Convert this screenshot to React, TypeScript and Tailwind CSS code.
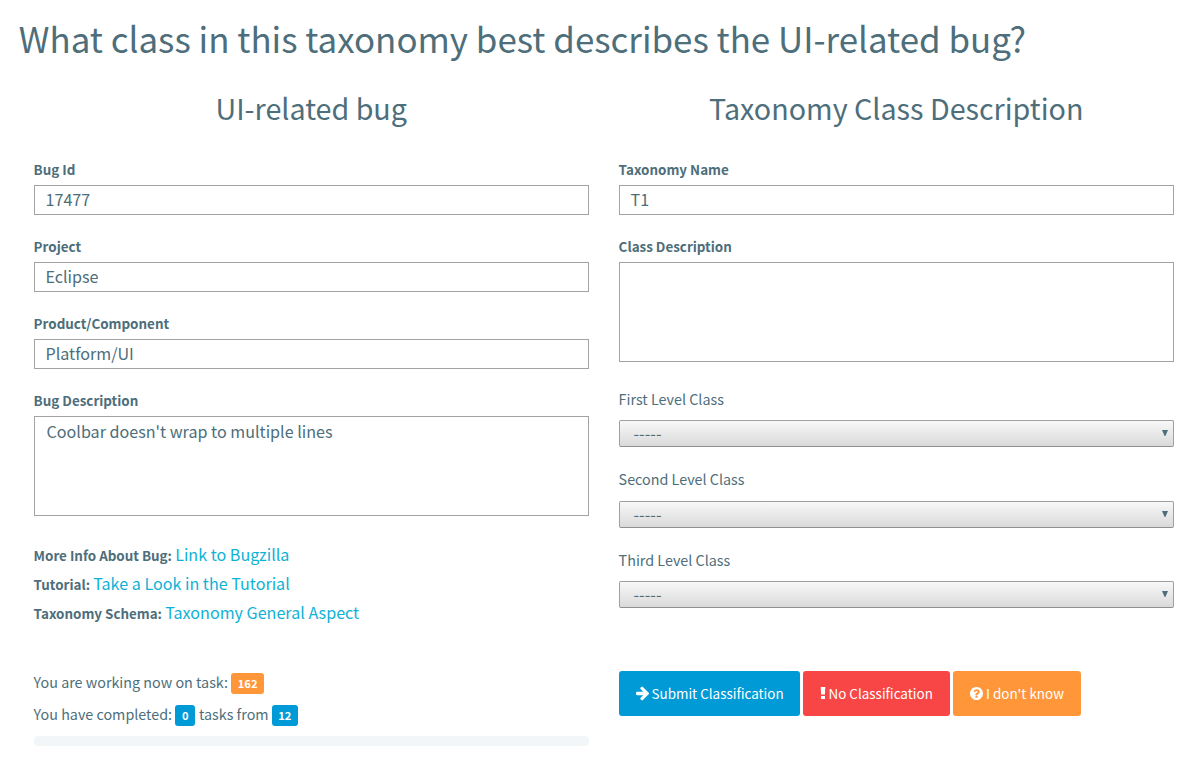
import type { ReactNode } from "react";

function Field({ label, value, tall = false }: { label: string; value: string; tall?: boolean }) {
  return (
    <div className="flex flex-col">
      <label className="-ml-[0.4px] h-[26px] text-[13.42px] leading-5 font-bold">{label}</label>
      {tall ? (
        <div className="h-[100px] border border-[#a3a3a3] bg-white pt-0.5 pl-[11.5px] text-[16.13px] leading-6">{value}</div>
      ) : (
        <div className="h-[30px] border border-[#a3a3a3] bg-white pl-[10.5px] text-[16.13px] leading-[26px]">{value}</div>
      )}
    </div>
  );
}

function LevelSelect({ label }: { label: string }) {
  return (
    <div className="flex flex-col">
      <span className="-ml-[0.4px] h-[31.4px] text-[14.34px] leading-5">{label}</span>
      <div className="flex h-[27px] items-start justify-between rounded-[2px] border border-[#a0a0a0] border-b-[#8f8f8f] bg-linear-to-b from-[#f8f8f8] to-[#dadada] pr-[5px] pl-[13.5px]">
        <span className="text-[16.14px] leading-[25px]">-----</span>
        <svg className="mt-[9px] h-[6px] w-[6px]" viewBox="0 0 6 6" fill="#4d6e7a">
          <path d="M0 0h6L3.4 6h-.8z" />
        </svg>
      </div>
    </div>
  );
}

function Badge({ className, children }: { className: string; children: ReactNode }) {
  return (
    <span className={`inline-block h-[21px] rounded-[3px] text-center align-baseline text-[11.2px] leading-[20px] font-bold text-white ${className}`}>
      {children}
    </span>
  );
}

function ActionButton({ className, icon, children }: { className: string; icon: ReactNode; children: ReactNode }) {
  return (
    <button className={`flex h-[45px] items-center rounded-[3px] text-[13.45px] leading-none whitespace-nowrap text-white ${className}`}>
      {icon}
      <span className="pb-px leading-5">{children}</span>
    </button>
  );
}

function InfoLine({ label, link }: { label: string; link: string }) {
  return (
    <p className="-ml-[0.4px] h-[29px] text-[16.13px] leading-[29px]">
      <b className="text-[13.4px]">{label}</b>
      <a className="ml-[3.2px] text-[#0fb2d6]">{link}</a>
    </p>
  );
}

export default function App() {
  return (
    <main className="h-[777px] w-[1201px] bg-white pt-4 pl-[19px] font-['Noto_Sans_CJK_SC',sans-serif] text-[#4d6e7a]">
      <h1 className="-ml-[0.2px] h-[72px] text-[34.9px] leading-[44px]">What class in this taxonomy best describes the UI-related bug?</h1>
      <div className="flex gap-[30px] pl-[15px]">
        <section className="w-[555px]">
          <h2 className="-ml-[0.5px] h-[71px] text-center text-[28.7px] leading-10">UI-related bug</h2>
          <div className="flex flex-col gap-[21px]">
            <Field label="Bug Id" value="17477" />
            <Field label="Project" value="Eclipse" />
            <Field label="Product/Component" value="Platform/UI" />
            <Field label="Bug Description" value="Coolbar doesn't wrap to multiple lines" tall />
          </div>
          <div className="mt-6">
            <InfoLine label="More Info About Bug:" link="Link to Bugzilla" />
            <InfoLine label="Tutorial:" link="Take a Look in the Tutorial" />
            <InfoLine label="Taxonomy Schema:" link="Taxonomy General Aspect" />
          </div>
          <div className="mt-[39px] -ml-[0.4px] text-[14.34px] leading-8">
            <p className="h-8">
              You are working now on task: <Badge className="w-[33px] bg-[#ff973a]">162</Badge>
            </p>
            <p className="h-[38px]">
              You have completed: <Badge className="mr-[0.4px] w-5 bg-[#009bd7]">0</Badge> tasks from{" "}
              <Badge className="w-[26px] bg-[#009bd7]">12</Badge>
            </p>
          </div>
          <div className="h-[10px] rounded-[4px] bg-[#f2f6f8]" />
        </section>
        <section className="w-[555px]">
          <h2 className="-ml-[0.5px] h-[71px] text-center text-[28.7px] leading-10">Taxonomy Class Description</h2>
          <div className="flex flex-col gap-[21px]">
            <Field label="Taxonomy Name" value="T1" />
            <Field label="Class Description" value="" tall />
          </div>
          <div className="mt-[27px] flex flex-col gap-[22px]">
            <LevelSelect label="First Level Class" />
            <LevelSelect label="Second Level Class" />
            <LevelSelect label="Third Level Class" />
          </div>
          <div className="mt-[62.8px] flex gap-[3px]">
            <ActionButton
              className="w-[181px] gap-[3px] bg-[#009bd7] pl-[16.5px]"
              icon={
                <svg className="h-[15px] w-[13px]" viewBox="64 0 1472 1664" fill="currentColor">
                  <path d="M1472 832q0 54-37 91l-651 651q-39 37-91 37-51 0-90-37l-75-75q-38-38-38-91t38-91l293-293H117q-52 0-84.500-37.500T0 896V768q0-53 32.500-90.500T117 640h704L528 346q-38-36-38-90t38-90l75-75q38-38 90-38 53 0 91 38l651 651q37 35 37 90z" transform="translate(64)" />
                </svg>
              }
            >
              Submit Classification
            </ActionButton>
            <ActionButton
              className="w-[147px] gap-[2.5px] bg-[#f84545] pl-[17px]"
              icon={
                <svg className="h-3 w-[6px]" viewBox="0 0 6 12" fill="currentColor">
                  <path d="M.7 0h4.600L4.900 7.500H1.100zM1 9h4v3H1z" />
                </svg>
              }
            >
              No Classification
            </ActionButton>
            <ActionButton
              className="w-32 gap-[3px] bg-[#ff973a] pl-[17px]"
              icon={
                <svg className="h-[13px] w-[13px]" viewBox="0 0 1536 1536" fill="currentColor">
                  <path fillRule="evenodd" d="M896 1248v-192q0-14-9-23t-23-9H672q-14 0-23 9t-9 23v192q0 14 9 23t23 9h192q14 0 23-9t9-23zm256-672q0-88-55.500-163T958 297t-170-41q-243 0-371 213-15 24 8 42l132 100q7 6 19 6 16 0 25-12 53-68 86-92 34-24 86-24 48 0 85.500 26t37.500 59q0 38-20 61t-68 45q-63 28-115.500 86.500T640 892v36q0 14 9 23t23 9h192q14 0 23-9t9-23q0-19 21.500-49.500T972 829q32-18 49-28.500t46-35 44.500-48 28-60.500 12.500-81zm384 192q0 209-103 385.500T1153.500 1433 768 1536t-385.500-103T103 1153.500 0 768t103-385.500T382.500 103 768 0t385.500 103T1433 382.500 1536 768z" />
                </svg>
              }
            >
              I don't know
            </ActionButton>
          </div>
        </section>
      </div>
    </main>
  );
}
